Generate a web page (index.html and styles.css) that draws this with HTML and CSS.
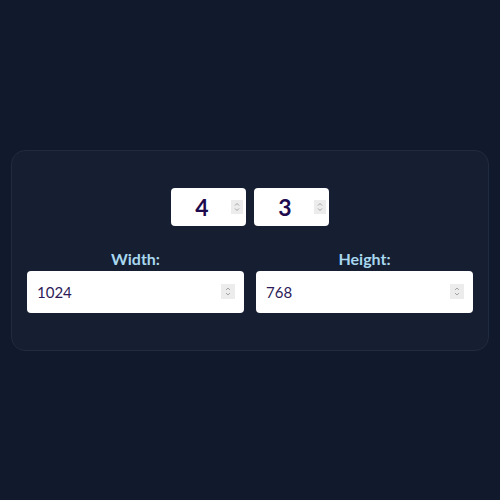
FILE: index.html
```html
<!DOCTYPE html>
<html>
<head>
<meta charset="utf-8">
<link rel="stylesheet" href="styles.css">
</head>
<body>
<main class="page">
  <section class="card">
    <div class="ratio">
      <span class="box box-ratio">
        <input class="ratio-input" type="number" value="4">
        <span class="spin"><svg viewBox="0 0 12 14" width="12" height="14"><path d="M4 5.5 L6 3.5 L8 5.5 M4 8.5 L6 10.5 L8 8.5" fill="none" stroke="#a3a3a3" stroke-width="1"/></svg></span>
      </span>
      <span class="box box-ratio">
        <input class="ratio-input" type="number" value="3">
        <span class="spin"><svg viewBox="0 0 12 14" width="12" height="14"><path d="M4 5.5 L6 3.5 L8 5.5 M4 8.5 L6 10.5 L8 8.5" fill="none" stroke="#a3a3a3" stroke-width="1"/></svg></span>
      </span>
    </div>
    <div class="dims">
      <label class="field">
        <span class="label">Width:</span>
        <span class="box">
          <input class="dim-input" type="number" value="1024">
          <span class="spin spin-dim"><svg viewBox="0 0 14 15" width="14" height="15"><path d="M5 6 L7 4 L9 6 M5 9 L7 11 L9 9" fill="none" stroke="#a3a3a3" stroke-width="1"/></svg></span>
        </span>
      </label>
      <label class="field">
        <span class="label">Height:</span>
        <span class="box">
          <input class="dim-input" type="number" value="768">
          <span class="spin spin-dim"><svg viewBox="0 0 14 15" width="14" height="15"><path d="M5 6 L7 4 L9 6 M5 9 L7 11 L9 9" fill="none" stroke="#a3a3a3" stroke-width="1"/></svg></span>
        </span>
      </label>
    </div>
  </section>
</main>
</body>
</html>
```
FILE: styles.css
```css
html, body {
  margin: 0;
  padding: 0;
  background: #111a2c;
  height: 100%;
}
body {
  font-family: Lato, "Noto Sans", sans-serif;
}
.page {
  padding: 150px 11px 0 11px;
}
.card {
  background: #161e31;
  border: 1px solid #212b3f;
  border-radius: 14px;
  padding: 37px 15px 37px 15px;
  display: flex;
  flex-direction: column;
  align-items: center;
  gap: 23px;
}
.ratio {
  display: flex;
  gap: 8px;
}
.box {
  position: relative;
  display: block;
}
input[type=number] {
  -moz-appearance: textfield;
  appearance: textfield;
}
input::-webkit-inner-spin-button,
input::-webkit-outer-spin-button {
  -webkit-appearance: none;
  margin: 0;
}
.spin {
  position: absolute;
  right: 3px;
  top: 12px;
  width: 12px;
  height: 14px;
  background: #ececec;
  display: flex;
}
.spin-dim {
  right: 9px;
  top: 13px;
  width: 14px;
  height: 15px;
}
.ratio-input {
  display: block;
  box-sizing: border-box;
  width: 75px;
  height: 38px;
  border: none;
  border-radius: 4px;
  background: #fff;
  font-family: Lato, "Noto Sans", sans-serif;
  font-size: 23px;
  font-weight: 700;
  color: #1e0b4d;
  text-align: center;
  padding: 0 15px 0 2px;
  outline: none;
}
.dims {
  align-self: stretch;
  display: grid;
  grid-template-columns: 1fr 1fr;
  gap: 12px;
}
.field {
  display: flex;
  flex-direction: column;
  align-items: stretch;
  gap: 2px;
}
.label {
  text-align: center;
  color: #a8d8ef;
  font-size: 16px;
  font-weight: 700;
  line-height: 20px;
}
.dim-input {
  display: block;
  box-sizing: border-box;
  width: 100%;
  height: 42px;
  border: none;
  border-radius: 4px;
  background: #fff;
  font-family: Lato, "Noto Sans", sans-serif;
  font-size: 15px;
  color: #2c1b58;
  padding: 0 20px 0 10px;
  outline: none;
}
```
